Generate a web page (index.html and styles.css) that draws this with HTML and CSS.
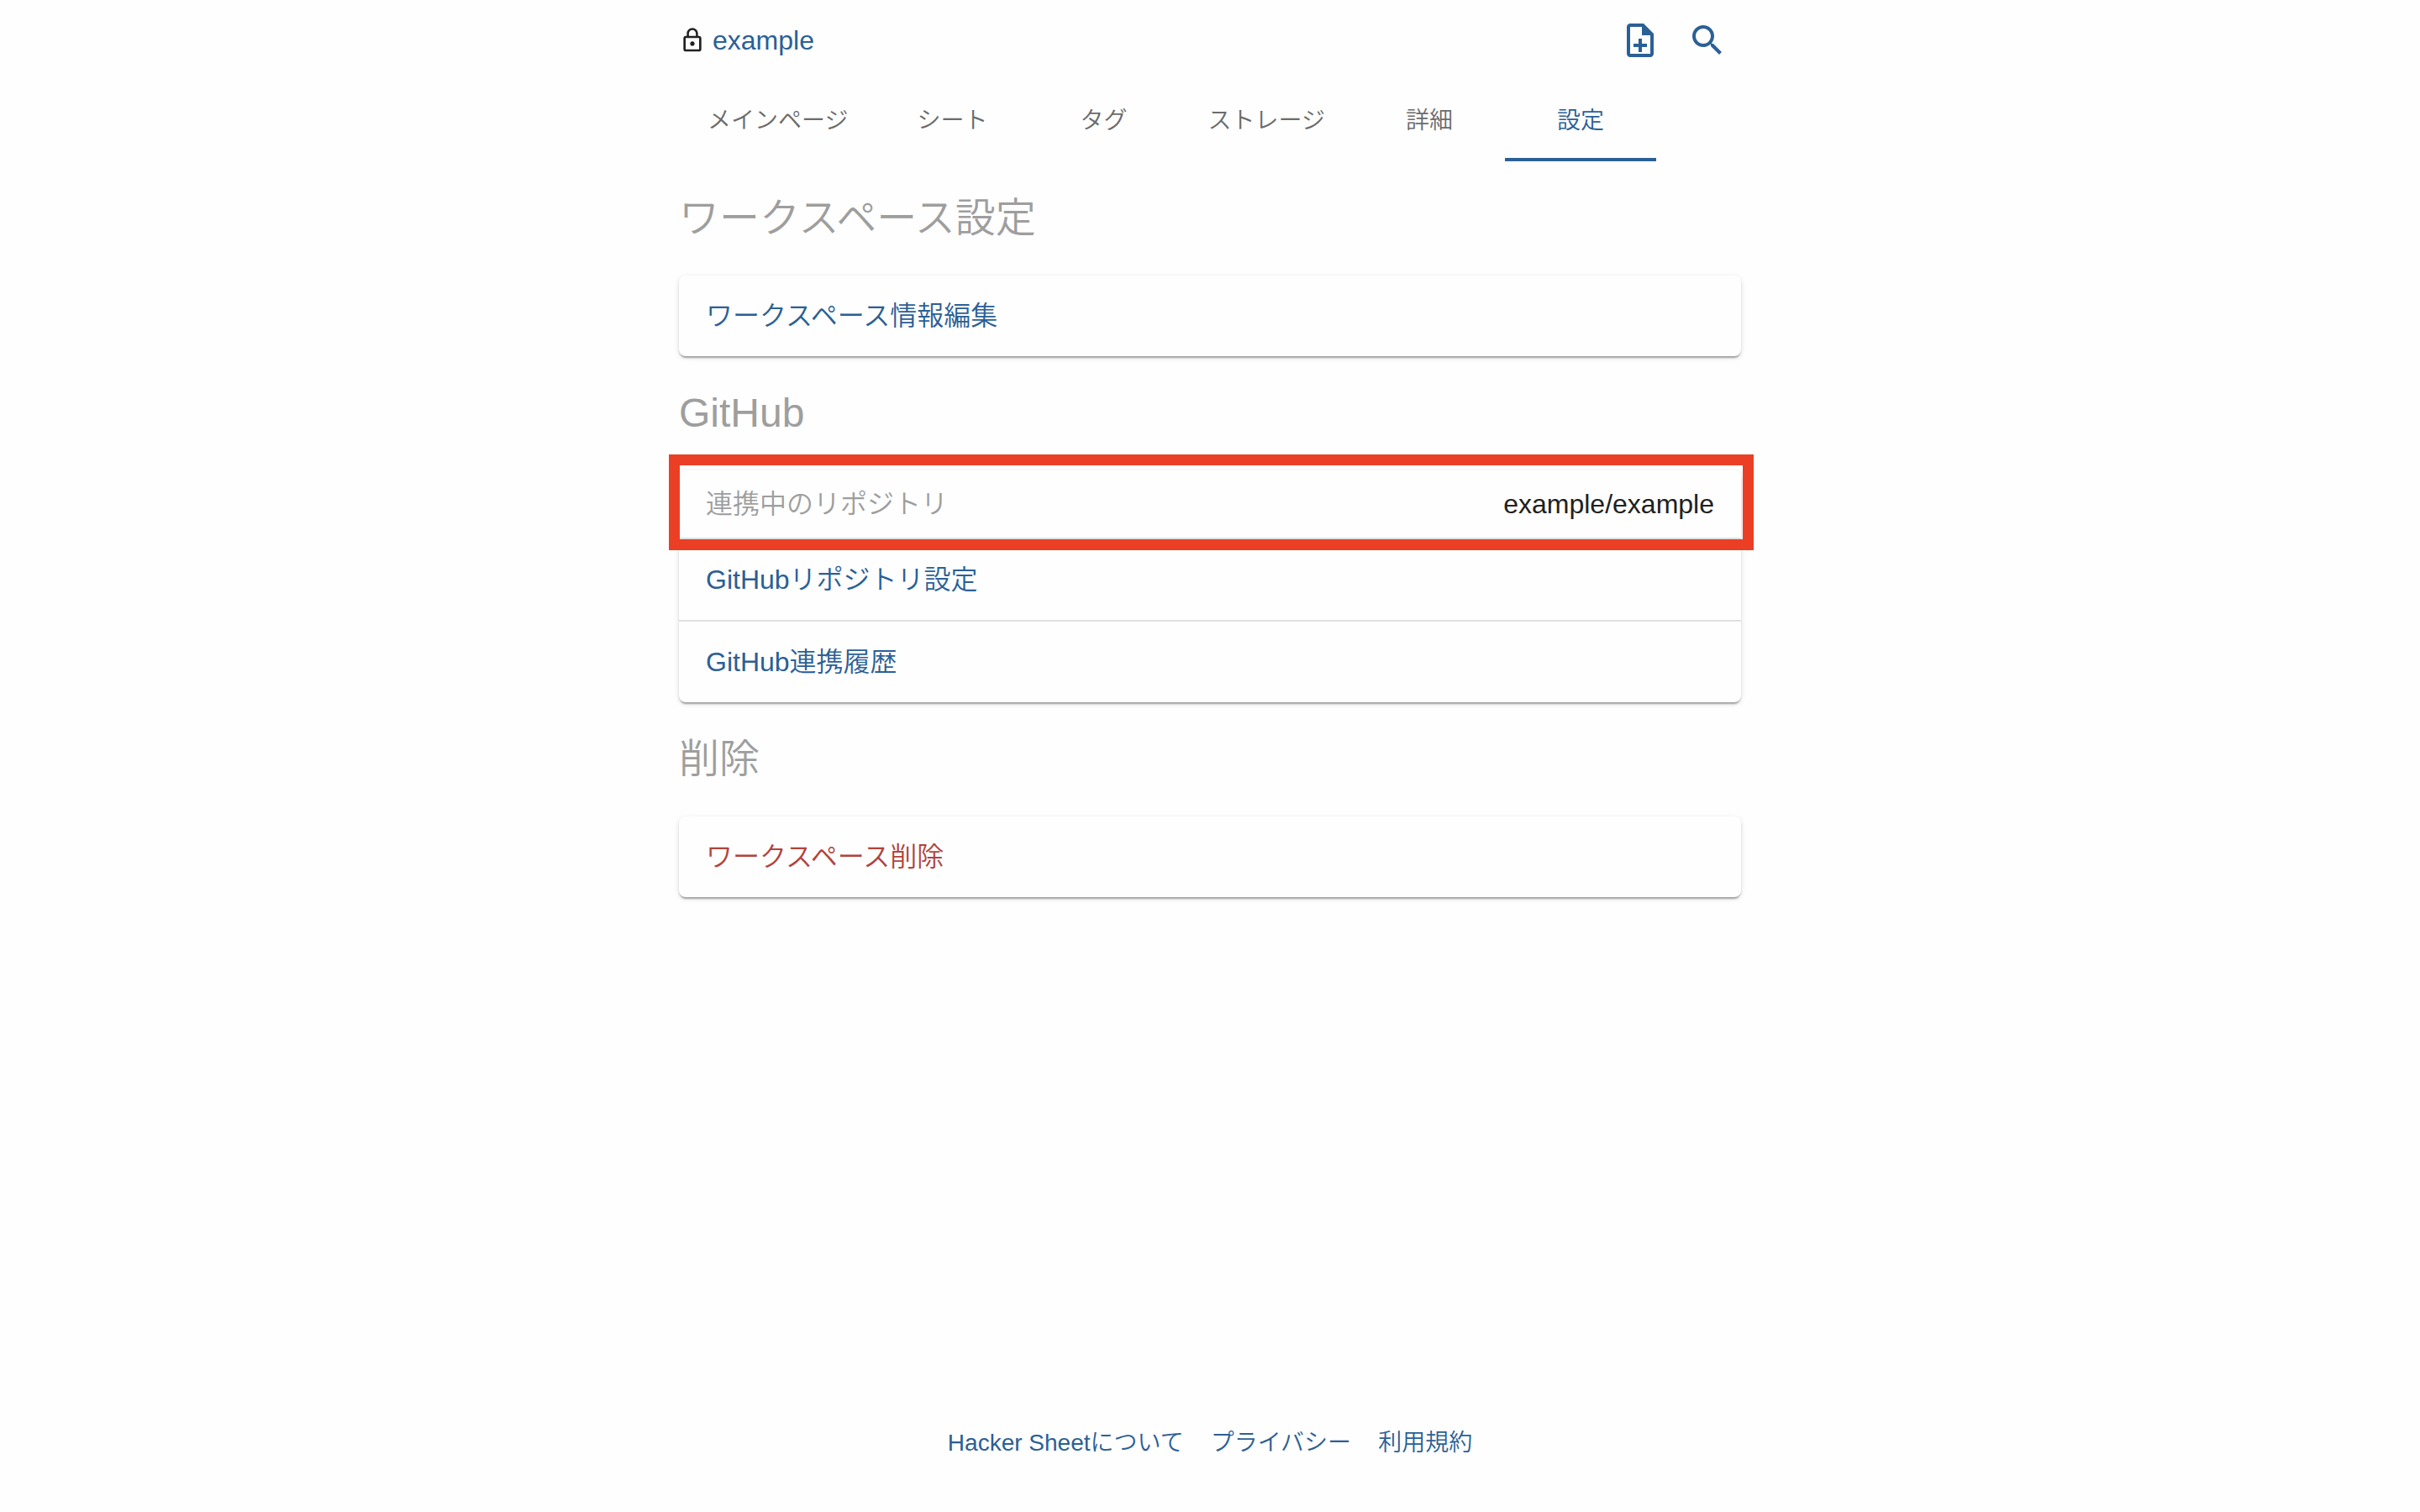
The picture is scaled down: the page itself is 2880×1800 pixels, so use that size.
FILE: index.html
```html
<!DOCTYPE html>
<html lang="ja">
<head>
  <meta charset="utf-8">
  <meta name="viewport" content="width=device-width, initial-scale=1">
  <title>example - ワークスペース設定</title>
  <link rel="stylesheet" href="styles.css">
</head>
<body>
  <div class="page">
    <header class="header">
      <div class="workspace">
        <svg class="lock-icon" viewBox="0 0 24 24" aria-hidden="true"><path d="M12 17c1.100 0 2-.9 2-2s-.9-2-2-2-2 .9-2 2 .9 2 2 2zm6-9h-1V6c0-2.760-2.240-5-5-5S7 3.240 7 6v2H6c-1.100 0-2 .9-2 2v10c0 1.100.9 2 2 2h12c1.100 0 2-.9 2-2V10c0-1.100-.9-2-2-2zM8.900 6c0-1.710 1.390-3.100 3.100-3.100s3.100 1.390 3.100 3.100v2H8.900V6zM18 20H6V10h12v10z"/></svg>
        <a class="link" href="#workspace">example</a>
      </div>
      <div class="actions">
        <button class="icon-button" type="button" aria-label="シートを追加">
          <svg class="icon" viewBox="0 0 24 24" aria-hidden="true"><path d="M13 11h-2v3H8v2h3v3h2v-3h3v-2h-3zm1-9H6c-1.100 0-2 .9-2 2v16c0 1.100.89 2 1.990 2H18c1.100 0 2-.9 2-2V8l-6-6zm4 18H6V4h7v5h5v11z"/></svg>
        </button>
        <button class="icon-button" type="button" aria-label="検索">
          <svg class="icon" viewBox="0 0 24 24" aria-hidden="true"><path d="M15.500 14h-.79l-.28-.27C15.410 12.590 16 11.110 16 9.500 16 5.910 13.090 3 9.500 3S3 5.910 3 9.500 5.910 16 9.500 16c1.610 0 3.090-.59 4.230-1.570l.27.28v.79l5 4.990L20.490 19l-4.990-5zm-6 0C7.010 14 5 11.990 5 9.500S7.010 5 9.500 5 14 7.010 14 9.500 11.990 14 9.500 14z"/></svg>
        </button>
      </div>
    </header>

    <nav class="tabs" aria-label="ワークスペース">
      <a class="tab" href="#main">メインページ</a>
      <a class="tab" href="#sheets">シート</a>
      <a class="tab" href="#tags">タグ</a>
      <a class="tab" href="#storage">ストレージ</a>
      <a class="tab" href="#details">詳細</a>
      <a class="tab tab-active" href="#settings" aria-current="page">設定</a>
    </nav>

    <main class="content">
      <section>
        <h2 class="heading">ワークスペース設定</h2>
        <ul class="card">
          <li class="row"><a class="link" href="#edit">ワークスペース情報編集</a></li>
        </ul>
      </section>
      <section>
        <h2 class="heading">GitHub</h2>
        <ul class="card">
          <li class="row row-info">
            <span class="label">連携中のリポジトリ</span>
            <span>example/example</span>
          </li>
          <li class="row"><a class="link" href="#repository">GitHubリポジトリ設定</a></li>
          <li class="row"><a class="link" href="#history">GitHub連携履歴</a></li>
        </ul>
      </section>
      <section>
        <h2 class="heading">削除</h2>
        <ul class="card">
          <li class="row"><a class="link link-danger" href="#delete">ワークスペース削除</a></li>
        </ul>
      </section>
    </main>

    <footer class="footer">
      <a class="link" href="#about">Hacker Sheetについて</a>
      <a class="link" href="#privacy">プライバシー</a>
      <a class="link" href="#terms">利用規約</a>
    </footer>
  </div>
</body>
</html>
```
FILE: styles.css
```css
:root {
  --primary: #2b6095;
  --danger: #b1433c;
  --text: #212121;
  --muted: #9e9e9e;
  --surface: #fefefe;
}

* {
  box-sizing: border-box;
}

body {
  margin: 0;
  background: var(--surface);
  color: var(--text);
  font-family: "Liberation Sans", "Noto Sans CJK JP", sans-serif;
  font-size: 32px;
  font-weight: 350;
  line-height: 48px;
}

.page {
  display: flex;
  flex-direction: column;
  width: 100%;
  max-width: 1264px;
  min-height: 100vh;
  margin: 0 auto;
}

.link {
  color: var(--primary);
  text-decoration: none;
}

.link-danger {
  color: var(--danger);
}

.header {
  display: flex;
  align-items: center;
  justify-content: space-between;
  min-height: 96px;
}

.workspace {
  display: flex;
  align-items: center;
  gap: 8px;
}

.lock-icon {
  width: 32px;
  height: 32px;
  fill: currentColor;
}

.actions {
  display: flex;
}

.icon-button {
  display: flex;
  padding: 16px;
  border: 0;
  background: none;
  color: var(--primary);
  cursor: pointer;
}

.icon {
  width: 48px;
  height: 48px;
  fill: currentColor;
}

.tabs {
  display: flex;
}

.tab {
  display: flex;
  align-items: center;
  justify-content: center;
  min-width: 180px;
  height: 96px;
  padding: 0 34px;
  color: #6b6b6b;
  font-size: 28px;
  text-decoration: none;
}

.tab-active {
  box-shadow: inset 0 -4px 0 var(--primary);
  color: var(--primary);
}

.content {
  flex: 1;
}

.heading {
  margin: 0;
  padding: 32px 0;
  color: var(--muted);
  font-size: 48px;
  font-weight: 350;
  line-height: 72px;
}

.card {
  margin: 0;
  padding: 0;
  border-radius: 8px;
  background: var(--surface);
  box-shadow:
    0 4px 2px -2px rgba(0, 0, 0, 0.2),
    0 2px 2px 0 rgba(0, 0, 0, 0.14),
    0 2px 6px 0 rgba(0, 0, 0, 0.12);
  list-style: none;
}

.row {
  padding: 24px 32px;
}

.row + .row {
  border-top: 2px solid #e0e0e0;
}

.row-info {
  position: relative;
  display: flex;
  justify-content: space-between;
  padding: 16px 32px;
}

/* Marker frame drawn over the linked repository row */
.row-info::after {
  position: absolute;
  inset: -19px -15px -15px -12px;
  border: 13px solid #eb3f25;
  content: "";
}

.label {
  color: var(--muted);
}

.footer {
  display: flex;
  flex-wrap: wrap;
  justify-content: center;
  gap: 32px;
  padding: 32px 0 62px;
  font-size: 28px;
  line-height: 40px;
}
```
